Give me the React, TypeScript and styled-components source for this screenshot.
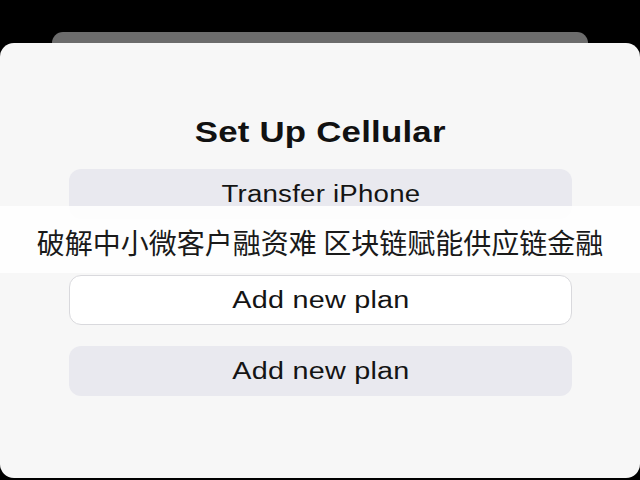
import React from "react";
import styled, { createGlobalStyle } from "styled-components";

const Global = createGlobalStyle`
  html, body { margin: 0; padding: 0; background: #000; }
  body { width: 640px; height: 480px; overflow: hidden; }
`;

const Screen = styled.div`
  position: relative;
  width: 640px;
  height: 480px;
  background: #000;
  display: flex;
  flex-direction: column;
  font-family: "Liberation Sans", Arial, sans-serif;
`;

const BackSheet = styled.div`
  margin: 32px 52px 0;
  height: 11px;
  background: #6c6c6c;
  border-radius: 14px 14px 0 0;
`;

const Sheet = styled.div`
  height: 435px;
  background: #f7f7f7;
  border-radius: 14px;
  display: flex;
  flex-direction: column;
  align-items: center;
  padding-top: 71px;
  box-sizing: border-box;
`;

/* Wide, display-style lettering: glyphs are drawn a touch broader than the face */
const Wide = styled.span<{ $x: number }>`
  display: inline-block;
  transform: scaleX(${(p) => p.$x});
  transform-origin: center;
  white-space: nowrap;
`;

const Title = styled.h1`
  margin: 0 0 19px;
  font-size: 30px;
  line-height: 36px;
  font-weight: 700;
  color: #111;
  letter-spacing: 0.2px;
`;

const Option = styled.div<{ $outlined?: boolean; $gap: number }>`
  width: 503px;
  height: 50px;
  margin-top: ${(p) => p.$gap}px;
  margin-left: 1px;
  box-sizing: border-box;
  border-radius: 12px;
  display: flex;
  align-items: center;
  justify-content: center;
  font-size: 23px;
  color: #141414;
  letter-spacing: 0.2px;
  background: ${(p) => (p.$outlined ? "#ffffff" : "#e9e9ef")};
  border: ${(p) => (p.$outlined ? "1px solid #d9d9dd" : "none")};
`;

const Banner = styled.div`
  position: absolute;
  left: 0;
  right: 0;
  top: 206px;
  height: 67px;
  background: rgba(255, 255, 255, 0.88);
  display: flex;
  align-items: center;
  justify-content: center;
  padding-top: 4px;
  box-sizing: border-box;
  font-family: "Noto Sans CJK SC", sans-serif;
  font-size: 28px;
  color: #1a1a1a;
`;

export default function App() {
  return (
    <>
      <Global />
      <Screen>
        <BackSheet />
        <Sheet>
          <Title>
            <Wide $x={1.16}>Set Up Cellular</Wide>
          </Title>
          <Option $gap={0}>
            <Wide $x={1.2}>Transfer iPhone</Wide>
          </Option>
          <Option $gap={56} $outlined>
            <Wide $x={1.25}>Add new plan</Wide>
          </Option>
          <Option $gap={21}>
            <Wide $x={1.25}>Add new plan</Wide>
          </Option>
        </Sheet>
        <Banner>破解中小微客户融资难 区块链赋能供应链金融</Banner>
      </Screen>
    </>
  );
}
